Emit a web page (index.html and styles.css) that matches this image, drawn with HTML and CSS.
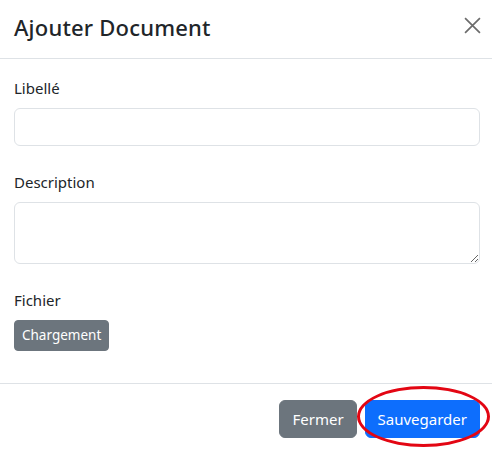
FILE: index.html
```html
<!DOCTYPE html>
<html lang="fr">
<head>
    <meta charset="UTF-8">
    <meta name="viewport" content="width=device-width, initial-scale=1.0">
    <title>Ajouter Document</title>
    <link rel="stylesheet" href="styles.css">
</head>
<body>
    <div class="modal-content">
        <div class="modal-header">
            <h5 class="modal-title">Ajouter Document</h5>
            <button type="button" class="btn-close" aria-label="Close">
                <svg viewBox="0 0 16 16" width="17" height="17">
                    <path d="M1 1L15 15M15 1L1 15" stroke="#6c6c6c" stroke-width="1.6" fill="none"/>
                </svg>
            </button>
        </div>

        <div class="modal-body">
            <div class="field">
                <label for="libelle">Libellé</label>
                <input type="text" id="libelle" class="form-control">
            </div>
            <div class="field">
                <label for="description">Description</label>
                <textarea id="description" class="form-control" rows="2"></textarea>
            </div>
            <div class="field">
                <label>Fichier</label>
                <div><button type="button" class="btn btn-sm btn-secondary">Chargement</button></div>
            </div>
        </div>

        <div class="modal-footer">
            <button type="button" class="btn btn-secondary">Fermer</button>
            <button type="button" class="btn btn-primary">Sauvegarder</button>
            <!-- red circle marking the save button -->
            <div class="highlight"></div>
        </div>
    </div>
</body>
</html>
```

FILE: styles.css
```css
body { margin: 0; font-family: "Noto Sans", "Open Sans", sans-serif; font-size: 16px; line-height: 1.5; color: #212529; background: #fff; }
.modal-content { width: 492px; background: #fff; }
.modal-header { display: flex; align-items: flex-start; justify-content: space-between; height: 59px; box-sizing: border-box; padding: 11px 11px 0 14px; border-bottom: 1px solid #dee2e6; }
.modal-title { margin: 0; font-size: 22px; font-weight: 500; line-height: 32px; letter-spacing: 0.2px; }
.btn-close { display: flex; padding: 0; border: none; background: none; cursor: pointer; margin-top: 6px; }
.modal-body { display: flex; flex-direction: column; gap: 24px; padding: 17px 12px 32px 14px; }
.field { display: flex; flex-direction: column; }
.field label { margin-bottom: 8px; font-size: 15px; line-height: 24px; }
.form-control { box-sizing: border-box; width: 100%; padding: 6px 12px; font: inherit; border: 1px solid #dee2e6; border-radius: 6px; background: #fff; }
input.form-control { height: 38px; }
textarea.form-control { height: 62px; resize: vertical; display: block; }
.btn { font-family: inherit; font-size: 15px; line-height: 1.5; padding: 6px 12px; border: 1px solid transparent; border-radius: 6px; color: #fff; cursor: pointer; }
.btn-sm { font-size: 13.5px; padding: 4px 7px; border-radius: 4px; height: 31px; }
.btn-secondary { background: #6c757d; border-color: #6c757d; }
.btn-primary { background: #0d6efd; border-color: #0d6efd; }
.modal-footer { position: relative; display: flex; justify-content: flex-end; gap: 8px; padding: 16px 12px 11px; border-top: 1px solid #dee2e6; }
.modal-footer .btn { height: 38px; }
.highlight { position: absolute; left: 357px; top: 2px; width: 133px; height: 61px; box-sizing: border-box; border: 3.5px solid #e30613; border-radius: 50%; }
```
